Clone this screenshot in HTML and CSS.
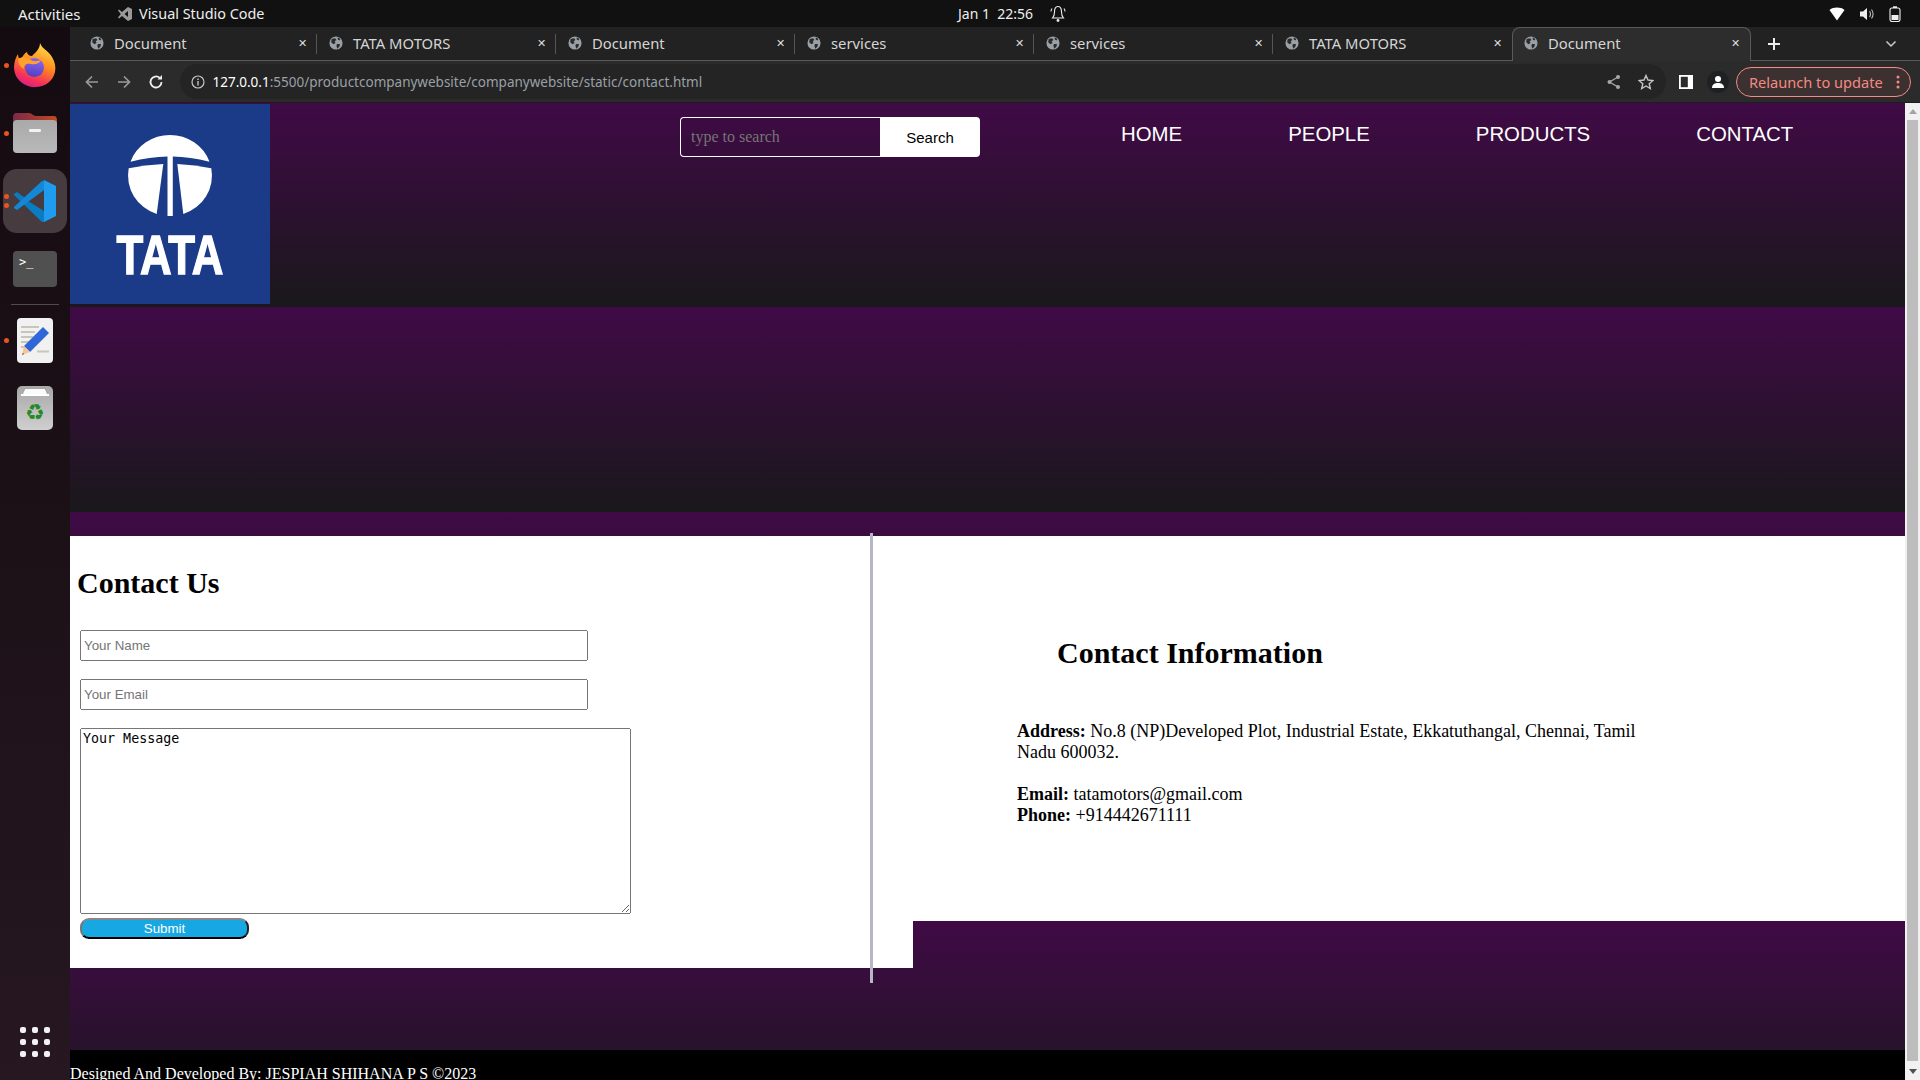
FILE: index.html
```html
<!DOCTYPE html>
<html>
<head>
  <title>Document</title>
  <meta charset="UTF-8">
  <link rel="stylesheet" href="styles.css">
</head>
<body>
  <svg class="icon-defs" width="0" height="0">
    <defs>
      <symbol id="globe" viewBox="0 0 16 16">
        <circle cx="8" cy="8" r="7.5" fill="#9aa0a6"/>
        <path d="M3 3.5 L7 2.5 L8.5 4.5 L6.5 6 L7.5 8 L5 9.5 L2.5 7 Z M9 9 L12.5 9 L12 12 L9.5 14.5 L8.5 11.5 Z M10 1.5 L13 3.5 L12 5 L10 4 Z" fill="#2b2b2b"/>
      </symbol>
      <linearGradient id="ffBody" x1="0.7" y1="0" x2="0.3" y2="1">
        <stop offset="0" stop-color="#ffe04a"/>
        <stop offset="0.45" stop-color="#ff8a1e"/>
        <stop offset="0.8" stop-color="#f5315a"/>
        <stop offset="1" stop-color="#d81e8c"/>
      </linearGradient>
      <linearGradient id="ffGlobe" x1="0.6" y1="0" x2="0.4" y2="1">
        <stop offset="0" stop-color="#8f66f0"/>
        <stop offset="1" stop-color="#4f3fc0"/>
      </linearGradient>
      <linearGradient id="folderBack" x1="0" y1="0" x2="1" y2="0">
        <stop offset="0" stop-color="#7a2a4a"/>
        <stop offset="1" stop-color="#c4481f"/>
      </linearGradient>
      <linearGradient id="folderFront" x1="0" y1="0" x2="0" y2="1">
        <stop offset="0" stop-color="#a9a9a9"/>
        <stop offset="1" stop-color="#b9b9b9"/>
      </linearGradient>
      <linearGradient id="trashBody" x1="0" y1="0" x2="0" y2="1">
        <stop offset="0" stop-color="#a8a8a8"/>
        <stop offset="1" stop-color="#cfcfcf"/>
      </linearGradient>
    </defs>
  </svg>

  <div class="topbar">
    <div class="topbar-left">
      <span class="activities">Activities</span>
      <span class="app-name">
        <svg width="16" height="16" viewBox="0 0 16 16"><path d="M11 1 L15 3 V13 L11 15 L5 10 L2 12.5 L1 11.5 L3.8 8 L1 4.5 L2 3.5 L5 6 Z M11 5 L7.5 8 L11 11 Z" fill="#9a9a9a"/></svg>
        Visual Studio Code
      </span>
    </div>
    <div class="clock">
      <span>Jan 1&nbsp; 22:56</span>
      <svg width="16" height="18" viewBox="0 0 16 18"><path d="M8 1.5 C5 1.5 4.5 4 4.5 7 C4.5 10 3.8 11.5 2.5 13 H13.5 C12.2 11.5 11.5 10 11.5 7 C11.5 4 11 1.5 8 1.5 Z M2 3.5 C1.2 4.5 1 5.5 1 6.5 M14 3.5 C14.8 4.5 15 5.5 15 6.5" fill="none" stroke="#eee" stroke-width="1.1"/><circle cx="8" cy="15.5" r="1.4" fill="#eee"/></svg>
    </div>
    <div class="tray">
      <svg width="16" height="14" viewBox="0 0 16 14"><path d="M0.5 3 C4.5 -0.2 11.5 -0.2 15.5 3 L8 13.5 Z" fill="#fff"/></svg>
      <svg width="16" height="14" viewBox="0 0 16 14"><path d="M1 4.5 H4 L8 1 V13 L4 9.5 H1 Z" fill="#eee"/><path d="M10.5 4 C11.8 5.5 11.8 8.5 10.5 10 M12.5 2.5 C14.6 5 14.6 9 12.5 11.5" fill="none" stroke="#bbb" stroke-width="1.1"/></svg>
      <svg width="12" height="16" viewBox="0 0 12 16"><rect x="1" y="2" width="10" height="13.5" rx="2" fill="none" stroke="#eee" stroke-width="1.1"/><rect x="4" y="0.3" width="4" height="1.7" fill="#eee"/><rect x="2.5" y="9" width="7" height="5" fill="#eee"/></svg>
    </div>
  </div>

  <div class="desktop">
    <nav class="dock">
      <div class="dock-item has-dot">
        <svg width="44" height="44" viewBox="0 0 44 44">
          <path d="M27 0 C29 6 36 8 39 14 C42 19 43 24 42 29 C40 38 32 44 22 44 C11 44 1 36 1 24 C1 19 3 14 5 11 C5 14 6 16 8 17 C9 13 12 10 14 9 C14 11 16 13 19 13 C22 10 27 6 27 0 Z" fill="url(#ffBody)"/>
          <circle cx="21.500" cy="24.500" r="9.500" fill="url(#ffGlobe)"/>
          <path d="M5 16 C9 13 14 14 18 17 C21 19 25 18 28 17 C26 21 22 22 18 21 C14 20 10 22 11 26 C7 24 5 20 5 16 Z" fill="#ffa12b"/>
        </svg>
      </div>
      <div class="dock-item has-dot">
        <svg width="44" height="40" viewBox="0 0 44 40">
          <path d="M0 4 C0 2 1 0 3 0 H16 C19 0 20 3 23 3 H41 C43 3 44 5 44 7 V20 H0 Z" fill="url(#folderBack)"/>
          <rect x="0" y="7" width="44" height="33" rx="4" fill="url(#folderFront)"/>
          <rect x="16" y="16" width="12" height="3" rx="1.2" fill="#f2f2f2"/>
        </svg>
      </div>
      <div class="dock-item dock-item-active has-two-dots">
        <svg width="42" height="42" viewBox="0 0 42 42">
          <path d="M30 0 L42 6 V36 L30 42 L30 10 Z" fill="#1f9cf0"/>
          <path d="M30 0 L11 18 L3 12 L0 14 V15 L28 42 L30 42 V31 L14 21 L30 10 Z" fill="#0a7cc4"/>
          <path d="M0 27 V28 L3 30 L30 10 V1 L28 1 Z" fill="#1488d4"/>
        </svg>
      </div>
      <div class="dock-item">
        <div class="terminal-icon">&gt;_</div>
      </div>
      <div class="dock-sep"></div>
      <div class="dock-item has-dot">
        <svg width="36" height="45" viewBox="0 0 36 45">
          <rect width="36" height="45" rx="4" fill="#f1f1f1"/>
          <path d="M4 9 H22 M4 14 H18 M4 19 H16 M4 24 H12 M4 29 H10 M20 33.500 H32" stroke="#c8c6ba" stroke-width="2"/>
          <path d="M26 9 L32 15 L13 34 L7 28 Z" fill="#2f66d8"/>
          <path d="M7 28 L13 34 L5 37 Z" fill="#f5c596"/>
          <path d="M6 35 L5 37 L7 36 Z" fill="#333"/>
        </svg>
      </div>
      <div class="dock-item">
        <div class="trash-icon">
          <svg width="36" height="44" viewBox="0 0 36 44">
            <rect width="36" height="44" rx="5" fill="url(#trashBody)"/>
            <path d="M5 9 L8 2.500 H28 L31 9 Z" fill="#fafafa" stroke="#888" stroke-width="0.6"/>
            <rect x="4" y="8" width="28" height="2" fill="#fff"/>
          </svg>
          <span class="recycle">&#9851;</span>
        </div>
      </div>
      <div class="dock-grid">
        <i></i><i></i><i></i><i></i><i></i><i></i><i></i><i></i><i></i>
      </div>
    </nav>

    <div class="browser">
      <div class="tabstrip">
        <div class="tab"><svg class="globe"><use href="#globe"/></svg><span class="tab-title">Document</span><span class="tab-close">&#10005;</span></div>
        <div class="tab"><svg class="globe"><use href="#globe"/></svg><span class="tab-title">TATA MOTORS</span><span class="tab-close">&#10005;</span></div>
        <div class="tab"><svg class="globe"><use href="#globe"/></svg><span class="tab-title">Document</span><span class="tab-close">&#10005;</span></div>
        <div class="tab"><svg class="globe"><use href="#globe"/></svg><span class="tab-title">services</span><span class="tab-close">&#10005;</span></div>
        <div class="tab"><svg class="globe"><use href="#globe"/></svg><span class="tab-title">services</span><span class="tab-close">&#10005;</span></div>
        <div class="tab tab-before-active"><svg class="globe"><use href="#globe"/></svg><span class="tab-title">TATA MOTORS</span><span class="tab-close">&#10005;</span></div>
        <div class="tab tab-active"><svg class="globe"><use href="#globe"/></svg><span class="tab-title">Document</span><span class="tab-close">&#10005;</span></div>
        <svg class="new-tab" width="14" height="14" viewBox="0 0 14 14"><path d="M7 1 V13 M1 7 H13" stroke="#eee" stroke-width="2"/></svg>
        <svg class="tab-menu" width="12" height="8" viewBox="0 0 12 8"><path d="M1.500 1.500 L6 6 L10.500 1.500" fill="none" stroke="#ccc" stroke-width="1.500"/></svg>
      </div>

      <div class="toolbar">
        <svg class="tool-btn" width="16" height="16" viewBox="0 0 16 16"><path d="M14 8 H3 M8 2.500 L2.500 8 L8 13.500" fill="none" stroke="#9a9a9a" stroke-width="1.700"/></svg>
        <svg class="tool-btn" width="16" height="16" viewBox="0 0 16 16"><path d="M2 8 H13 M8 2.500 L13.500 8 L8 13.500" fill="none" stroke="#9a9a9a" stroke-width="1.700"/></svg>
        <svg class="tool-btn" width="16" height="16" viewBox="0 0 16 16"><path d="M13.500 8 A5.500 5.500 0 1 1 11.800 4" fill="none" stroke="#f0f0f0" stroke-width="1.800"/><path d="M9.500 5.500 H14 V1 Z" fill="#f0f0f0"/></svg>
        <div class="omnibox">
          <svg width="14" height="14" viewBox="0 0 14 14"><circle cx="7" cy="7" r="6" fill="none" stroke="#c4c7c5" stroke-width="1.200"/><path d="M7 6 V10.500 M7 3.500 V5" stroke="#c4c7c5" stroke-width="1.400"/></svg>
          <span class="url"><b>127.0.0.1</b>:5500/productcompanywebsite/companywebsite/static/contact.html</span>
          <span class="omni-actions">
            <svg width="16" height="16" viewBox="0 0 16 16"><circle cx="12" cy="3" r="2" fill="#a8a8a8"/><circle cx="12" cy="13" r="2" fill="#a8a8a8"/><circle cx="3.500" cy="8" r="2" fill="#a8a8a8"/><path d="M12 3 L3.500 8 L12 13" fill="none" stroke="#a8a8a8" stroke-width="1.300"/></svg>
            <svg width="16" height="16" viewBox="0 0 16 16"><path d="M8 1.500 L10 6 L15 6.500 L11.200 9.700 L12.300 14.500 L8 12 L3.700 14.500 L4.800 9.700 L1 6.500 L6 6 Z" fill="none" stroke="#c4c4c4" stroke-width="1.400"/></svg>
          </span>
        </div>
        <svg class="side-panel" width="14" height="14" viewBox="0 0 14 14"><rect width="14" height="14" fill="#fff"/><rect x="1.800" y="1.800" width="7" height="10.400" fill="#2b2b2b"/></svg>
        <span class="profile">
          <svg width="14" height="14" viewBox="0 0 14 14"><circle cx="7" cy="4" r="3" fill="#fff"/><path d="M1 13 C1 9 4 8 7 8 C10 8 13 9 13 13 Z" fill="#fff"/></svg>
        </span>
        <div class="relaunch">
          <span>Relaunch to update</span>
          <svg width="4" height="14" viewBox="0 0 4 14"><circle cx="2" cy="2" r="1.500" fill="#f28b82"/><circle cx="2" cy="7" r="1.500" fill="#f28b82"/><circle cx="2" cy="12" r="1.500" fill="#f28b82"/></svg>
        </div>
      </div>

      <div class="viewport">
        <div class="page">
          <div class="header">
            <div class="logo">
              <svg width="200" height="200" viewBox="0 0 200 200">
                <rect width="200" height="200" fill="#1b3a88"/>
                <path d="M60.500 57.700 A42 40.500 0 0 1 139.500 57.700 Q120 53 102.800 52.500 L102.800 112 L97.500 112 L97.500 52.500 Q80 53 60.500 57.700 Z" fill="#fff"/>
                <path d="M58.700 64.300 Q75 61 93.300 60 L86.700 110 A42 40.500 0 0 1 58.700 64.300 Z" fill="#fff"/>
                <path d="M141.300 64.300 Q125 61 107.300 60 L113.300 110 A42 40.500 0 0 0 141.300 64.300 Z" fill="#fff"/>
                <text class="logo-word" x="46.500" y="170" textLength="107" lengthAdjust="spacingAndGlyphs">TATA</text>
              </svg>
            </div>
            <div class="search-box">
              <input type="text" class="search-input" placeholder="type to search">
              <button class="search-btn">Search</button>
            </div>
            <ul class="nav">
              <li>HOME</li>
              <li>PEOPLE</li>
              <li>PRODUCTS</li>
              <li>CONTACT</li>
            </ul>
          </div>

          <div class="contact">
            <div class="vline"></div>
            <div class="contact-form">
              <h1>Contact Us</h1>
              <form>
                <input type="text" class="field" placeholder="Your Name">
                <input type="text" class="field" placeholder="Your Email">
                <textarea class="message">Your Message</textarea>
                <button type="button" class="submit-btn">Submit</button>
              </form>
            </div>
            <div class="contact-info">
              <h1>Contact Information</h1>
              <div class="info-text">
                <p><b>Address:</b> No.8 (NP)Developed Plot, Industrial Estate, Ekkatuthangal, Chennai, Tamil Nadu 600032.</p>
                <p><b>Email:</b> tatamotors@gmail.com<br><b>Phone:</b> +914442671111</p>
              </div>
            </div>
          </div>

          <div class="footer">Designed And Developed By: JESPIAH SHIHANA P S &copy;2023</div>
        </div>
        <div class="scrollbar">
          <div class="scroll-up"></div>
          <div class="scroll-thumb"></div>
          <div class="scroll-down"></div>
        </div>
      </div>
    </div>
  </div>
</body>
</html>
```

FILE: styles.css
```css
* {
  box-sizing: border-box;
}

html, body {
  margin: 0;
  height: 100%;
  overflow: hidden;
}

body {
  display: flex;
  flex-direction: column;
  width: 1920px;
  height: 1080px;
  background-color: #111;
  font-family: "Noto Sans", sans-serif;
}

.icon-defs {
  position: absolute;
}

/* ubuntu top bar */
.topbar {
  flex: none;
  display: grid;
  grid-template-columns: 1fr auto 1fr;
  align-items: center;
  height: 27px;
  background-color: #111;
  color: #eee;
  font-size: 14.400px;
}

.topbar-left {
  display: flex;
  align-items: center;
  padding-left: 18px;
}

.activities {
  width: 99px;
  font-size: 15px;
}

.app-name {
  display: flex;
  align-items: center;
  gap: 6px;
}

.clock {
  display: flex;
  align-items: center;
  gap: 17px;
  font-size: 14px;
  padding-left: 104px;
}

.tray {
  display: flex;
  align-items: center;
  justify-content: flex-end;
  gap: 14px;
  padding-right: 19px;
}

.desktop {
  flex: 1;
  display: flex;
  min-height: 0;
}

/* dock */
.dock {
  flex: none;
  position: relative;
  display: flex;
  flex-direction: column;
  align-items: center;
  width: 70px;
  padding-top: 6px;
  background: linear-gradient(#140b10, #261720);
}

.dock-item {
  position: relative;
  display: flex;
  align-items: center;
  justify-content: center;
  width: 64px;
  height: 64px;
  margin-bottom: 4px;
  border-radius: 14px;
}

.dock-item-active {
  background-color: #463c40;
}

.has-dot::before,
.has-two-dots::before,
.has-two-dots::after {
  content: "";
  position: absolute;
  left: 1px;
  width: 5px;
  height: 5px;
  border-radius: 50%;
  background-color: #e95420;
}

.has-dot::before {
  top: 30px;
}

.has-two-dots::before {
  top: 25px;
}

.has-two-dots::after {
  top: 34px;
}

.terminal-icon {
  width: 44px;
  height: 36px;
  padding: 4px 0 0 6px;
  border-radius: 4px;
  background-color: #505050;
  color: #fff;
  font-family: "DejaVu Sans Mono", monospace;
  font-size: 12px;
  line-height: 14px;
}

.trash-icon {
  position: relative;
  width: 36px;
  height: 44px;
}

.trash-icon svg {
  display: block;
}

.recycle {
  position: absolute;
  left: 0;
  right: 0;
  top: 14px;
  text-align: center;
  font-family: "DejaVu Sans", sans-serif;
  font-size: 22px;
  line-height: 26px;
  color: #238a23;
}

.dock-sep {
  width: 48px;
  height: 1px;
  margin: -1px 0 3px;
  background-color: #55494f;
}

.dock-grid {
  position: absolute;
  left: 20px;
  bottom: 23px;
  display: grid;
  grid-template-columns: repeat(3, 6px);
  gap: 6px;
}

.dock-grid i {
  width: 6px;
  height: 6px;
  border-radius: 2px;
  background-color: #f2f2f2;
}

/* browser chrome */
.browser {
  flex: 1;
  display: flex;
  flex-direction: column;
  min-width: 0;
}

.tabstrip {
  flex: none;
  position: relative;
  display: flex;
  align-items: stretch;
  height: 34px;
  padding-left: 8px;
  background-color: #222;
  border-bottom: 1px solid #5a5a5a;
  color: #d5d5d5;
  font-size: 14.800px;
}

.tab {
  position: relative;
  display: flex;
  align-items: center;
  width: 239px;
  padding: 0 0 2px 12px;
}

.tab:not(.tab-active):not(.tab-before-active)::after {
  content: "";
  position: absolute;
  right: 0;
  top: 7px;
  bottom: 6px;
  width: 1px;
  background-color: #555;
}

.tab-active {
  height: 34px;
  padding: 0 0 4px 11px;
  background-color: #2d2d2d;
  border: 1px solid #5a5a5a;
  border-bottom: none;
  border-radius: 8px 8px 0 0;
}

.globe {
  width: 14px;
  height: 14px;
  margin-right: 10px;
}

.tab-title {
  flex: 1;
}

.tab-close {
  width: 19px;
  font-size: 11px;
  color: #ddd;
}

.new-tab {
  align-self: center;
  margin-left: 16px;
}

.tab-menu {
  position: absolute;
  right: 23px;
  top: 13px;
}

.toolbar {
  flex: none;
  display: flex;
  align-items: center;
  height: 42px;
  padding-left: 14px;
  background-color: #2b2b2b;
  border-bottom: 1px solid #1d1d1d;
}

.tool-btn {
  margin-right: 16px;
}

.omnibox {
  display: flex;
  align-items: center;
  width: 1486px;
  height: 35px;
  margin-left: 0;
  padding: 0 12px 0 11px;
  border-radius: 18px;
  background-color: #242424;
}

.url {
  flex: 1;
  margin-left: 7.500px;
  color: #9aa0a6;
  font-size: 13.500px;
}

.url b {
  color: #fff;
  font-weight: 400;
}

.omni-actions {
  display: flex;
  gap: 16px;
}

.side-panel {
  margin-left: 13px;
}

.profile {
  display: flex;
  align-items: center;
  justify-content: center;
  width: 22px;
  height: 22px;
  margin-left: 14px;
  border-radius: 50%;
  background-color: #1f2023;
}

.relaunch {
  display: flex;
  align-items: center;
  justify-content: space-between;
  width: 175px;
  height: 30px;
  margin-left: 7px;
  padding: 0 10px 0 12px;
  border: 1px solid #f28b82;
  border-radius: 15px;
  background-color: #3c3030;
  color: #f28b82;
  font-size: 14.600px;
}

/* the page */
.viewport {
  flex: 1;
  display: flex;
  min-height: 0;
  overflow: hidden;
}

.page {
  flex: 1;
  min-width: 0;
  background: repeating-linear-gradient(#400a46 0, #19181b 204.500px);
  font-family: "Liberation Serif", serif;
  color: #000;
}

.header {
  display: flex;
  align-items: flex-start;
  height: 409px;
  padding-top: 1px;
}

.logo {
  flex: none;
  width: 200px;
  height: 200px;
}

.logo svg {
  display: block;
}

.logo-word {
  font-family: "Liberation Sans", sans-serif;
  font-weight: 700;
  font-size: 55px;
  fill: #fff;
  stroke: #fff;
  stroke-width: 1.400px;
}

.search-box {
  display: flex;
  margin: 13px 0 0 410px;
}

.search-input {
  width: 200px;
  height: 40px;
  padding: 0 10px;
  border: 1px solid #fff;
  border-right: none;
  border-radius: 4px 0 0 4px;
  background: transparent;
  font-family: "Liberation Serif", serif;
  font-size: 16px;
  color: #fff;
}

.search-input::placeholder {
  color: #757575;
}

.search-btn {
  width: 100px;
  height: 40px;
  border: none;
  border-radius: 0 4px 4px 0;
  background-color: #fff;
  font-family: "Liberation Sans", sans-serif;
  font-size: 15px;
  color: #000;
}

.nav {
  display: flex;
  gap: 106px;
  margin: 19px 0 0 141px;
  padding: 0;
  list-style: none;
  font-family: "Liberation Sans", sans-serif;
  font-size: 20.400px;
  line-height: 23px;
  color: #fff;
}

.contact {
  position: relative;
  display: grid;
  grid-template-columns: 843px 1fr;
  align-items: start;
  margin-top: 24px;
}

.vline {
  position: absolute;
  left: 800px;
  top: -3px;
  width: 3px;
  height: 450px;
  background-color: #b8b5c8;
}

.contact-form {
  height: 432px;
  padding: 28px 0 0 7px;
  background-color: #fff;
}

h1 {
  margin: 0;
  font-size: 30px;
  line-height: 37px;
  font-weight: 700;
}

.contact-form form {
  display: flex;
  flex-direction: column;
  align-items: flex-start;
  gap: 18px;
  margin: 29px 0 0 3px;
}

.field {
  width: 508px;
  height: 31px;
  padding: 1px 2px;
  font-family: "Liberation Sans", sans-serif;
  font-size: 13.333px;
}

.message {
  width: 551px;
  height: 186px;
  margin: 0;
  padding: 2px;
  font-family: "DejaVu Sans Mono", monospace;
  font-size: 13.333px;
}

.submit-btn {
  width: 169px;
  height: 21px;
  margin-top: -14px;
  padding: 0;
  border: 2px outset #777;
  border-top-color: #888;
  border-bottom-color: #222;
  border-radius: 9px;
  background-color: #17a8e3;
  color: #fff;
  font-family: "Liberation Sans", sans-serif;
  font-size: 13.333px;
}

.contact-info {
  height: 385px;
  padding: 98px 0 0 144px;
  background-color: #fff;
}

.info-text {
  width: 640px;
  margin: 50px 0 0 -40px;
  font-size: 18px;
  line-height: 21px;
}

.info-text p {
  margin: 0 0 21px;
}

.footer {
  height: 200px;
  margin-top: 82px;
  padding-top: 15px;
  background-color: #000;
  color: #fff;
  font-size: 16px;
  line-height: 18px;
}

/* scrollbar */
.scrollbar {
  flex: none;
  display: flex;
  flex-direction: column;
  align-items: center;
  width: 15px;
  background-color: #f1f1f1;
}

.scroll-up,
.scroll-down {
  flex: none;
  width: 0;
  height: 0;
  margin: 6px 0;
  border-left: 4px solid transparent;
  border-right: 4px solid transparent;
}

.scroll-up {
  border-bottom: 5px solid #a3a3a3;
}

.scroll-down {
  border-top: 5px solid #505050;
}

.scroll-thumb {
  flex: 1;
  width: 11px;
  margin: 0 0 2px;
  background-color: #bdbdbd;
}
```
